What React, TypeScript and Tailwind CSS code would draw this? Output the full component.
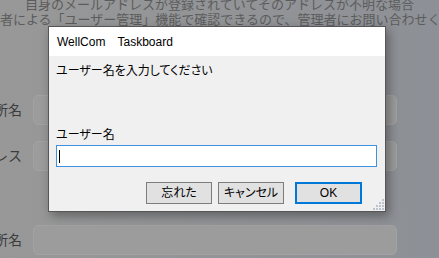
const jp = "font-['Liberation_Sans','Noto_Sans_CJK_JP',sans-serif]";

function BgRow({ label, className }: { label: string; className: string }) {
  return (
    <div className={`flex items-center ${className}`}>
      <div className="w-[22px] flex justify-end whitespace-nowrap text-[14px] leading-[16px] text-[#3c3c3c]">
        {label}
      </div>
      <div className="ml-[11px] w-[364px] h-[30px] rounded-[5px] bg-[#9c9c9c] border border-[#a2a2a2]" />
    </div>
  );
}

function ResizeGrip() {
  const dots: [number, number][] = [
    [9, 1],
    [6, 4], [9, 4],
    [3, 7], [6, 7], [9, 7],
    [0, 10], [3, 10], [6, 10], [9, 10],
  ];
  return (
    <svg width="11" height="12" viewBox="0 0 11 12" className="absolute right-[1px] bottom-[1px]">
      {dots.map(([x, y], i) => (
        <rect key={i} x={x} y={y} width="2" height="2" fill="#bcc4d0" />
      ))}
    </svg>
  );
}

export default function App() {
  return (
    <div className={`relative w-[439px] h-[258px] overflow-hidden bg-gradient-to-r from-[#989898] to-[#8d9096] ${jp}`}>
      {/* page behind the dialog */}
      <div className="text-[13px] leading-[15px] text-[#5c5c5c] whitespace-nowrap">
        <div className="mt-[-3px] text-center">自身のメールアドレスが登録されていてそのアドレスが不明な場合</div>
        <div>者による「ユーザー管理」機能で確認できるので、管理者にお問い合わせください。</div>
      </div>
      <BgRow label="事業所名" className="mt-[68px]" />
      <BgRow label="メールアドレス" className="mt-[16px]" />
      <BgRow label="事業所名" className="mt-[54px]" />

      {/* dialog */}
      <div className="absolute left-[48px] top-[26px] w-[338px] h-[186px] flex flex-col border border-[#565656] bg-[#f0f0f0] shadow-[3px_4px_10px_rgba(0,0,0,0.35)]">
        <div className="h-[29px] bg-white flex items-center pl-[8px] text-[12px] text-black">
          WellCom　Taskboard
        </div>
        <div className="flex-1 flex flex-col pl-[7px] pr-[8px] pt-[8px] text-[12px] text-black [font-feature-settings:'palt']">
          <div className="leading-[14px]">ユーザー名を入力してください</div>
          <div className="mt-[50px] leading-[14px]">ユーザー名</div>
          <div className="mt-[3px] h-[22px] bg-white border border-[#3f92e2] flex items-center pl-[2px]">
            <span className="w-px h-[13px] bg-black" />
          </div>
          <div className="mt-[15px] flex justify-end gap-[6px] pr-[15px]">
            <button className="w-[66px] h-[22px] bg-[#e1e1e1] border border-[#7d7d7d] text-[12px] leading-none">忘れた</button>
            <button className="w-[66px] h-[22px] bg-[#e1e1e1] border border-[#7d7d7d] text-[12px] leading-none">キャンセル</button>
            <button className="ml-[5px] w-[67px] h-[22px] bg-[#e1e1e1] border-2 border-[#0078d7] text-[12px] leading-none">OK</button>
          </div>
        </div>
        <ResizeGrip />
      </div>
    </div>
  );
}
